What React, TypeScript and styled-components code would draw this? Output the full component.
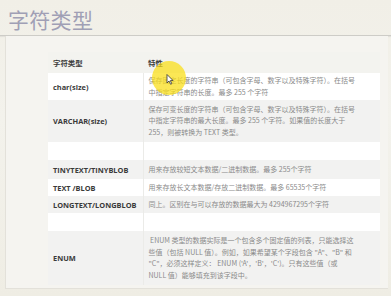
import styled, { createGlobalStyle } from 'styled-components'

const GlobalStyle = createGlobalStyle`
  html, body {
    margin: 0;
    padding: 0;
  }
  body {
    width: 391px;
    height: 296px;
    overflow: hidden;
    background: #efede4;
  }
`

const Page = styled.div`
  position: relative;
  width: 391px;
  height: 296px;
  display: flex;
  flex-direction: column;
  background: linear-gradient(180deg, #f1efe7 0%, #f3f2ec 40%, #efede4 100%);
  font-family: 'Open Sans', 'Noto Sans CJK SC', sans-serif;
`

const TitleBar = styled.header`
  height: 36px;
  flex-shrink: 0;
  display: flex;
  align-items: center;
  padding: 2px 0 0 8px;
  box-sizing: border-box;
  border-bottom: 1px solid #cdccc7;
  box-shadow: 0 1px 1px rgba(0, 0, 0, 0.06);

  h1 {
    margin: 0;
    font-family: 'Noto Sans CJK SC', sans-serif;
    font-weight: 400;
    font-size: 21px;
    letter-spacing: 0.3px;
    color: #a09fb5;
  }
`

const Slide = styled.main`
  flex: 1;
  margin: 0 3px 7px 5px;
  border-left: 1px solid #e3e1da;
  border-bottom: 1px solid #e3e1da;
  background: #f5f4f0;
  padding: 16px 0 0 42px;
`

const Table = styled.table`
  width: 332px;
  border-collapse: collapse;
  table-layout: fixed;

  col.type {
    width: 95px;
  }
`

const Row = styled.tr<{ $h: number; $shade: 'head' | 'white' | 'gray' }>`
  height: ${(p) => p.$h}px;
  background: ${(p) => (p.$shade === 'white' ? '#ffffff' : p.$shade === 'gray' ? '#f2f2f1' : '#f3f3ef')};
`

const TypeCell = styled.td`
  padding: 0 0 0 5px;
  font-size: 7.4px;
  font-weight: 700;
  color: #3a3a3a;
  white-space: nowrap;
  vertical-align: middle;
  border-right: 1px solid #ebebe8;
`

const HeadCell = styled.th`
  padding: 0 0 0 5px;
  text-align: left;
  font-family: 'Noto Sans CJK SC', sans-serif;
  font-size: 7.4px;
  font-weight: 700;
  color: #3a3a3a;
  vertical-align: middle;
`

const DescCell = styled.td`
  padding: 0 4px 0 5px;
  font-family: 'Noto Sans CJK SC', sans-serif;
  font-size: 7px;
  line-height: 11.5px;
  color: #8a8a8a;
  white-space: nowrap;
  vertical-align: middle;
`

const Highlight = styled.div`
  position: absolute;
  left: 152px;
  top: 61px;
  width: 34px;
  height: 34px;
  border-radius: 50%;
  background: rgba(250, 222, 20, 0.72);
  pointer-events: none;

  svg {
    position: absolute;
    left: 14px;
    top: 13px;
  }
`

const rows = [
  {
    type: 'char(size)',
    h: 27,
    shade: 'white' as const,
    lines: ['保存固定长度的字符串（可包含字母、数字以及特殊字符）。在括号', '中指定字符串的长度。最多 255 个字符'],
  },
  {
    type: 'VARCHAR(size)',
    h: 42,
    shade: 'gray' as const,
    lines: [
      '保存可变长度的字符串（可包含字母、数字以及特殊字符）。在括号',
      '中指定字符串的最大长度。最多 255 个字符。如果值的长度大于',
      '255，则被转换为 TEXT 类型。',
    ],
  },
  { type: '', h: 18, shade: 'white' as const, lines: [] },
  {
    type: 'TINYTEXT/TINYBLOB',
    h: 19,
    shade: 'gray' as const,
    lines: ['用来存放较短文本数据/二进制数据。最多  255个字符'],
  },
  {
    type: 'TEXT /BLOB',
    h: 17,
    shade: 'white' as const,
    lines: ['用来存放长文本数据/存放二进制数据。最多 65535个字符'],
  },
  {
    type: 'LONGTEXT/LONGBLOB',
    h: 17,
    shade: 'gray' as const,
    lines: ['同上。区别在与可以存放的数据最大为 4294967295个字符'],
  },
  { type: '', h: 18, shade: 'white' as const, lines: [] },
  {
    type: 'ENUM',
    h: 54,
    shade: 'gray' as const,
    lines: [
      '\u00a0ENUM 类型的数据实际是一个包含多个固定值的列表，只能选择这',
      '些值（包括 NULL 值）。例如，如果希望某个字段包含 "A"、"B" 和',
      '"C"，必须这样定义： ENUM (\'A\'，\'B\'，\'C\')。只有这些值（或',
      'NULL 值）能够填充到该字段中。',
    ],
  },
]

export default function App() {
  return (
    <Page>
      <GlobalStyle />
      <TitleBar>
        <h1>字符类型</h1>
      </TitleBar>
      <Slide>
        <Table>
          <colgroup>
            <col className="type" />
            <col />
          </colgroup>
          <thead>
            <Row $h={21} $shade="head">
              <HeadCell>字符类型</HeadCell>
              <HeadCell>特性</HeadCell>
            </Row>
          </thead>
          <tbody>
            {rows.map((r, i) => (
              <Row key={i} $h={r.h} $shade={r.shade}>
                <TypeCell>{r.type}</TypeCell>
                <DescCell>
                  {r.lines.map((l, j) => (
                    <div key={j}>{l}</div>
                  ))}
                </DescCell>
              </Row>
            ))}
          </tbody>
        </Table>
      </Slide>
      <Highlight>
        <svg width="8" height="11" viewBox="0 0 8 11">
          <path d="M1 0.5 L1 9 L3 7 L4.6 10.3 L5.8 9.7 L4.3 6.6 L7 6.5 Z" fill="#ffffff" stroke="#333" strokeWidth="0.8" />
        </svg>
      </Highlight>
    </Page>
  )
}
